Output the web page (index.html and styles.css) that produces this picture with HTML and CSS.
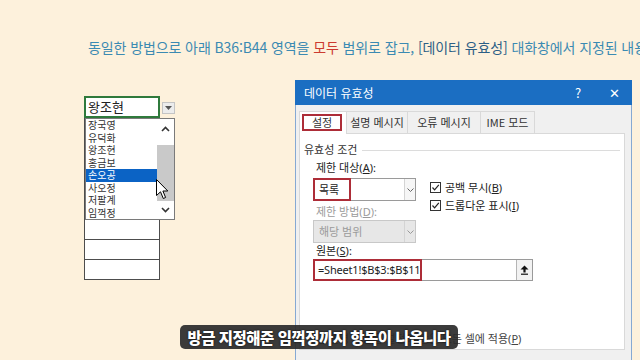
FILE: index.html
```html
<!DOCTYPE html>
<html lang="ko">
<head>
    <meta charset="UTF-8">
    <meta name="viewport" content="width=device-width, initial-scale=1.0">
    <title>데이터 유효성</title>
    <link rel="stylesheet" href="styles.css">
</head>
<body>
    <p class="caption">동일한 방법으로 아래 B36:B44 영역을 <span class="red">모두</span> 범위로 잡고, <span class="dark">[데이터 유효성]</span> 대화창에서 지정된 내용</p>

    <div class="stage">
        <!-- worksheet column B36:B44 with open in-cell list -->
        <div class="sheet">
            <div class="active-row">
                <div class="cell active">왕조현</div>
                <div class="drop-btn">
                    <svg width="7" height="4" viewBox="0 0 7 4"><polygon points="0,0 7,0 3.5,4" fill="#555"/></svg>
                </div>
            </div>
            <div class="cell"></div>
            <div class="cell"></div>
            <div class="cell"></div>
            <div class="cell"></div>
            <div class="cell"></div>
            <div class="cell"></div>
            <div class="cell"></div>
            <div class="cell"></div>

            <div class="list">
                <ul class="items">
                    <li>장국영</li>
                    <li>유덕화</li>
                    <li>왕조현</li>
                    <li>홍금보</li>
                    <li class="sel">손오공</li>
                    <li>사오정</li>
                    <li>저팔계</li>
                    <li>임꺽정</li>
                </ul>
                <div class="scroll">
                    <div class="sc-arrow up">
                        <svg width="9" height="6" viewBox="0 0 9 6"><polyline points="1,5 4.5,1.5 8,5" fill="none" stroke="#333" stroke-width="1.6"/></svg>
                    </div>
                    <div class="thumb"></div>
                    <div class="sc-arrow down">
                        <svg width="9" height="6" viewBox="0 0 9 6"><polyline points="1,1 4.5,4.5 8,1" fill="none" stroke="#333" stroke-width="1.6"/></svg>
                    </div>
                </div>
            </div>

            <svg class="cursor" width="13" height="21" viewBox="0 0 13 21">
                <path d="M0.5,0.5 L0.5,16.5 L4.5,12.8 L7.3,19.5 L9.6,18.5 L6.9,12 L11.8,12 Z" fill="#fff" stroke="#000" stroke-width="1"/>
            </svg>
        </div>

        <!-- data validation dialog -->
        <div class="dialog">
            <div class="titlebar">
                <span class="title">데이터 유효성</span>
                <span class="tb-btn">?</span>
                <span class="tb-btn">✕</span>
            </div>
            <div class="dlg-body">
                <div class="tabs">
                    <div class="tab on"><span class="mark">설정</span></div>
                    <div class="tab w2">설명 메시지</div>
                    <div class="tab w3">오류 메시지</div>
                    <div class="tab w4">IME 모드</div>
                </div>
                <div class="panel">
                    <div class="group">유효성 조건</div>
                    <div class="form">
                        <div class="col">
                            <div class="label">제한 대상(<u>A</u>):</div>
                            <div class="combo">
                                <span class="val">목록</span>
                                <span class="arrow"><svg width="7" height="4" viewBox="0 0 7 4"><polyline points="0.5,0.5 3.5,3.5 6.5,0.5" fill="none" stroke="#666" stroke-width="1"/></svg></span>
                                <span class="mark-box"></span>
                            </div>
                            <div class="label off">제한 방법(<u>D</u>):</div>
                            <div class="combo off">
                                <span class="val">해당 범위</span>
                                <span class="arrow"><svg width="7" height="4" viewBox="0 0 7 4"><polyline points="0.5,0.5 3.5,3.5 6.5,0.5" fill="none" stroke="#999" stroke-width="1"/></svg></span>
                            </div>
                        </div>
                        <div class="checks">
                            <div class="check">
                                <span class="box"><svg width="9" height="9" viewBox="0 0 9 9"><polyline points="1.5,4.5 3.6,6.8 7.8,1.8" fill="none" stroke="#222" stroke-width="1.2"/></svg></span>
                                <span>공백 무시(<u>B</u>)</span>
                            </div>
                            <div class="check">
                                <span class="box"><svg width="9" height="9" viewBox="0 0 9 9"><polyline points="1.5,4.5 3.6,6.8 7.8,1.8" fill="none" stroke="#222" stroke-width="1.2"/></svg></span>
                                <span>드롭다운 표시(<u>I</u>)</span>
                            </div>
                        </div>
                    </div>
                    <div class="label src">원본(<u>S</u>):</div>
                    <div class="source">
                        <span class="val">=Sheet1!$B$3:$B$11</span>
                        <span class="pick">
                            <svg width="9" height="10" viewBox="0 0 9 10"><polygon points="4.5,0.5 8.5,4.5 5.6,4.5 5.6,7.5 3.4,7.5 3.4,4.5 0.5,4.5" fill="#111"/><rect x="1" y="8.6" width="7" height="1.2" fill="#111"/></svg>
                        </span>
                        <span class="mark-box wide"></span>
                    </div>
                    <div class="check apply">
                        <span class="box"></span>
                        <span>변경 내용을 설정이 같은 모든 셀에 적용(<u>P</u>)</span>
                    </div>
                </div>
            </div>
        </div>
    </div>

    <div class="subtitle">방금 지정해준 임꺽정까지 항목이 나옵니다</div>
</body>
</html>
```

FILE: styles.css
```css
body {
    margin: 0;
    width: 640px;
    height: 360px;
    overflow: hidden;
    position: relative;
    background-color: #fdf1dc;
    font-family: "Noto Sans CJK KR", "Noto Sans", sans-serif;
}
.caption {
    margin: 0;
    padding: 39px 0 0 88px;
    font-size: 14px;
    line-height: 16px;
    white-space: nowrap;
    color: #3b8ab2;
    letter-spacing: -0.1px;
}
.caption .red {
    color: #cc3b30;
}
.caption .dark {
    color: #2c5f86;
}
.stage {
    display: flex;
    align-items: flex-start;
}

/* worksheet */
.sheet {
    position: relative;
    margin: 41px 0 0 84px;
    width: 91px;
}
.active-row {
    display: flex;
    align-items: flex-end;
    gap: 2px;
}
.cell {
    width: 76px;
    height: 20.3px;
    box-sizing: border-box;
    border: 1px solid #4d4d4d;
    border-top: none;
    background-color: #fff;
}
.cell.active {
    height: 22px;
    border: 2px solid #2f7a3c;
    padding-left: 2px;
    font-size: 13px;
    line-height: 18px;
    color: #222;
}
.drop-btn {
    width: 13px;
    height: 12px;
    margin-bottom: 4px;
    box-sizing: border-box;
    border: 1px solid #c4c4c4;
    background-color: #ececec;
    display: flex;
    align-items: center;
    justify-content: center;
}
.list {
    position: absolute;
    left: 1px;
    top: 22px;
    width: 90px;
    height: 102px;
    box-sizing: border-box;
    border: 1px solid #7a7a7a;
    background-color: #fff;
    display: flex;
}
.items {
    list-style: none;
    margin: 0;
    padding: 0;
    width: 71px;
    font-size: 10px;
    line-height: 12.5px;
    color: #333;
}
.items li {
    height: 12.5px;
    padding-left: 2px;
}
.items li.sel {
    background-color: #0b63c5;
    color: #fff;
}
.scroll {
    flex: 1;
    display: flex;
    flex-direction: column;
}
.sc-arrow {
    display: flex;
    justify-content: center;
    align-items: center;
}
.sc-arrow.up {
    height: 20px;
}
.sc-arrow.down {
    flex: 1;
}
.thumb {
    height: 56px;
    margin-top: 6px;
    background-color: #c9c9c9;
}
.cursor {
    position: absolute;
    left: 72px;
    top: 83px;
}

/* dialog */
.dialog {
    margin: 25px 0 0 120px;
    width: 337px;
    height: 290px;
    box-sizing: border-box;
    border: 1px solid #86a9d3;
    border-top: none;
    background-color: #f0f0f0;
}
.titlebar {
    height: 25px;
    margin: 0 -1px;
    background-color: #1b6ec2;
    color: #fff;
    display: flex;
    align-items: center;
    font-size: 12px;
}
.titlebar .title {
    flex: 1;
    padding-left: 9px;
}
.tb-btn {
    width: 36px;
    text-align: center;
    font-size: 13px;
}
.dlg-body {
    padding: 6px 6px 0 3px;
}
.tabs {
    display: flex;
    padding-left: 1px;
    height: 22px;
}
.tab {
    height: 22px;
    box-sizing: border-box;
    border: 1px solid #d9d9d9;
    border-bottom: none;
    margin-left: -1px;
    font-size: 11px;
    line-height: 20px;
    color: #333;
    text-align: center;
}
.tab.on {
    width: 48px;
    height: 23px;
    background-color: #fff;
    position: relative;
    z-index: 1;
    padding: 2px 4px 0 2px;
}
.tab.w2 { width: 62px; }
.tab.w3 { width: 74px; }
.tab.w4 { width: 55px; }
.mark {
    display: block;
    height: 17px;
    box-sizing: border-box;
    border: 2px solid #ad2d38;
    line-height: 13px;
}
.panel {
    height: 217px;
    box-sizing: border-box;
    border: 1px solid #d9d9d9;
    background-color: #fff;
    padding: 0 0 4px 4px;
    display: flex;
    flex-direction: column;
    font-family: "Noto Sans", "Noto Sans CJK KR", sans-serif;
    font-size: 11px;
    color: #222;
}
.group {
    margin-top: 9px;
    display: flex;
    align-items: center;
    line-height: 14px;
    color: #333;
}
.group::after {
    content: "";
    flex: 1;
    height: 1px;
    margin: 0 4px 0 5px;
    background-color: #dcdcdc;
}
.form {
    display: flex;
    padding-left: 9px;
    margin-top: 4px;
}
.label {
    line-height: 14px;
    padding-left: 3px;
}
.label.off {
    margin-top: 4px;
    color: #9a9a9a;
}
.combo {
    position: relative;
    width: 103px;
    height: 23px;
    margin-top: 3px;
    box-sizing: border-box;
    border: 1px solid #9a9a9a;
    background-color: #fff;
    display: flex;
}
.combo .val {
    flex: 1;
    padding-left: 5px;
    line-height: 21px;
}
.combo .arrow {
    width: 10px;
    border-left: 1px solid #d4d4d4;
    background-color: #f6f6f6;
    display: flex;
    align-items: center;
    justify-content: center;
}
.combo.off {
    margin-top: 1px;
    border-color: #c8c8c8;
    background-color: #e7e7e7;
    color: #9a9a9a;
}
.combo.off .arrow {
    background-color: #e7e7e7;
}
.mark-box {
    position: absolute;
    left: -1px;
    top: -1px;
    bottom: -1px;
    width: 34px;
    border: 2px solid #ad2d38;
}
.mark-box.wide {
    width: 105px;
}
.checks {
    margin-left: 14px;
    padding-top: 20px;
    display: flex;
    flex-direction: column;
    gap: 5px;
}
.check {
    display: flex;
    align-items: center;
    gap: 4px;
    line-height: 13px;
}
.box {
    width: 11px;
    height: 11px;
    box-sizing: border-box;
    border: 1px solid #333;
    background-color: #fff;
    display: flex;
    align-items: center;
    justify-content: center;
}
.label.src {
    margin: 1px 0 0 9px;
}
.source {
    position: relative;
    width: 220px;
    height: 22px;
    margin: 1px 0 0 9px;
    box-sizing: border-box;
    border: 1px solid #9a9a9a;
    background-color: #fff;
    display: flex;
}
.source .val {
    flex: 1;
    padding-left: 4px;
    line-height: 20px;
    letter-spacing: -0.2px;
}
.source .pick {
    width: 15px;
    border-left: 1px solid #b5b5b5;
    background-color: #f2f2f2;
    display: flex;
    align-items: center;
    justify-content: center;
}
.check.apply {
    margin: auto 0 0 10px;
    color: #444;
}
.subtitle {
    position: absolute;
    left: 180px;
    top: 325px;
    width: 278px;
    height: 24px;
    border-radius: 5px;
    background-color: rgba(42, 42, 42, 0.92);
    color: #fff;
    font-size: 15.5px;
    font-weight: 900;
    line-height: 24px;
    letter-spacing: -0.5px;
    text-align: center;
    white-space: nowrap;
    text-shadow: 0 0 2px #000;
}
```
